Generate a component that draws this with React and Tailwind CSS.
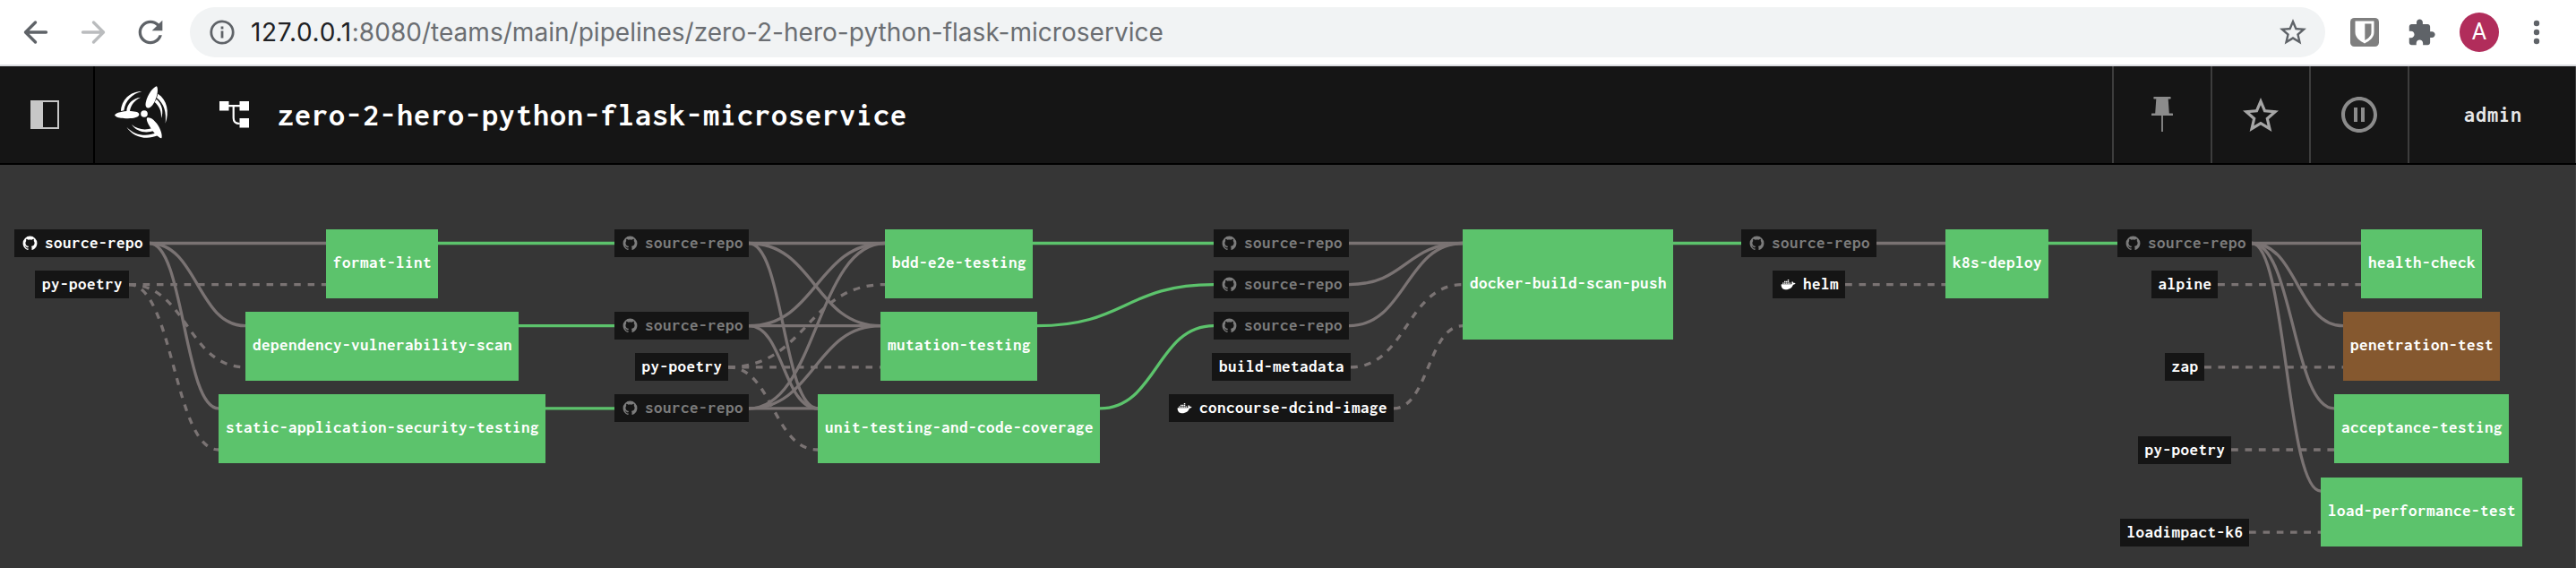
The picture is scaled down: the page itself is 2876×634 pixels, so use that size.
const GITHUB =
  "M12,2A10,10 0 0,0 2,12C2,16.42 4.87,20.17 8.84,21.5C9.34,21.58 9.5,21.27 9.5,21C9.5,20.77 9.5,20.14 9.5,19.31C6.73,19.91 6.14,17.97 6.14,17.97C5.68,16.81 5.03,16.5 5.03,16.5C4.12,15.88 5.1,15.9 5.1,15.9C6.1,15.97 6.63,16.93 6.63,16.93C7.5,18.45 8.97,18 9.54,17.76C9.63,17.11 9.89,16.67 10.17,16.42C7.95,16.17 5.62,15.31 5.62,11.5C5.62,10.39 6,9.5 6.65,8.79C6.55,8.54 6.2,7.5 6.75,6.15C6.75,6.15 7.59,5.88 9.5,7.17C10.29,6.95 11.15,6.84 12,6.84C12.85,6.84 13.71,6.95 14.5,7.17C16.41,5.88 17.25,6.15 17.25,6.15C17.8,7.5 17.45,8.54 17.35,8.79C18,9.5 18.38,10.39 18.38,11.5C18.38,15.32 16.04,16.16 13.81,16.41C14.17,16.72 14.5,17.33 14.5,18.26C14.5,19.6 14.5,20.68 14.5,21C14.5,21.27 14.66,21.59 15.17,21.5C19.14,20.16 22,16.42 22,12A10,10 0 0,0 12,2Z";
const WHALE =
  "M21.81 10.25C21.75 10.21 21.25 9.82 20.17 9.82C19.89 9.82 19.61 9.85 19.33 9.9C19.12 8.5 17.95 7.79 17.9 7.76L17.61 7.59L17.43 7.86C17.19 8.22 17 8.63 16.92 9.05C16.72 9.85 16.84 10.61 17.25 11.26C16.76 11.54 15.96 11.61 15.79 11.61H2.62C2.28 11.61 2 11.89 2 12.24C2 13.39 2.18 14.54 2.58 15.62C3.03 16.81 3.71 17.69 4.58 18.23C5.56 18.83 7.17 19.17 9 19.17C9.79 19.17 10.61 19.1 11.42 18.95C12.54 18.75 13.62 18.36 14.61 17.79C15.43 17.32 16.16 16.72 16.78 16C17.82 14.83 18.43 13.5 18.88 12.35H19.07C20.21 12.35 20.92 11.89 21.31 11.5C21.57 11.26 21.77 10.96 21.91 10.62L22 10.38L21.81 10.25Z";
const STAR =
  "M12,15.39L8.24,17.66L9.23,13.38L5.91,10.5L10.29,10.13L12,6.09L13.71,10.13L18.09,10.5L14.77,13.38L15.76,17.66M22,9.24L14.81,8.63L12,2L9.19,8.63L2,9.24L7.45,13.97L5.82,21L12,17.27L18.18,21L16.54,13.97L22,9.24Z";

// Top edge of each grid row, measured from the top of the canvas.
const ROWS = [72, 118, 164, 210, 256, 303, 349, 395];
const lineY = (row) => 87.5 + row * 46.1;

// [label, left, width, row, icon, dimmed]
const RESOURCES = [
  ["source-repo", 16, 151, 0, "github", false],
  ["py-poetry", 39, 105, 1, null, false],
  ["source-repo", 686, 150, 0, "github", true],
  ["source-repo", 686, 150, 2, "github", true],
  ["py-poetry", 709, 104, 3, null, false],
  ["source-repo", 686, 150, 4, "github", true],
  ["source-repo", 1355, 151, 0, "github", true],
  ["source-repo", 1355, 151, 1, "github", true],
  ["source-repo", 1355, 151, 2, "github", true],
  ["build-metadata", 1353, 155, 3, null, false],
  ["concourse-dcind-image", 1305, 251, 4, "docker", false],
  ["source-repo", 1944, 151, 0, "github", true],
  ["helm", 1979, 81, 1, "docker", false],
  ["source-repo", 2364, 150, 0, "github", true],
  ["alpine", 2402, 74, 1, null, false],
  ["zap", 2417, 44, 3, null, false],
  ["py-poetry", 2387, 104, 5, null, false],
  ["loadimpact-k6", 2367, 144, 7, null, false],
];

// [label, left, width, row, height, aborted]
const JOBS = [
  ["format-lint", 364, 125, 0, 77, false],
  ["dependency-vulnerability-scan", 274, 305, 2, 77, false],
  ["static-application-security-testing", 244, 365, 4, 77, false],
  ["bdd-e2e-testing", 988, 165, 0, 77, false],
  ["mutation-testing", 983, 175, 2, 77, false],
  ["unit-testing-and-code-coverage", 913, 315, 4, 77, false],
  ["docker-build-scan-push", 1633, 235, 0, 123, false],
  ["k8s-deploy", 2172, 115, 0, 77, false],
  ["health-check", 2636, 135, 0, 77, false],
  ["penetration-test", 2616, 175, 2, 77, true],
  ["acceptance-testing", 2606, 195, 4, 77, false],
  ["load-performance-test", 2591, 225, 6, 77, false],
];

// [x1, row1, x2, row2, kind]
const EDGES = [
  [167, 0, 364, 0, "plain"],
  [167, 0, 274, 2, "plain"],
  [167, 0, 244, 4, "plain"],
  [144, 1, 364, 1, "dashed"],
  [144, 1, 274, 3, "dashed"],
  [144, 1, 244, 5, "dashed"],
  [489, 0, 686, 0, "passed"],
  [579, 2, 686, 2, "passed"],
  [609, 4, 686, 4, "passed"],
  [836, 0, 988, 0, "plain"],
  [836, 0, 983, 2, "plain"],
  [836, 0, 913, 4, "plain"],
  [836, 2, 988, 0, "plain"],
  [836, 2, 983, 2, "plain"],
  [836, 2, 913, 4, "plain"],
  [836, 4, 988, 0, "plain"],
  [836, 4, 983, 2, "plain"],
  [836, 4, 913, 4, "plain"],
  [813, 3, 988, 1, "dashed"],
  [813, 3, 983, 3, "dashed"],
  [813, 3, 913, 5, "dashed"],
  [1153, 0, 1355, 0, "passed"],
  [1158, 2, 1355, 1, "passed"],
  [1228, 4, 1355, 2, "passed"],
  [1506, 0, 1633, 0, "plain"],
  [1506, 1, 1633, 0, "plain"],
  [1506, 2, 1633, 0, "plain"],
  [1508, 3, 1633, 1, "dashed"],
  [1556, 4, 1633, 2, "dashed"],
  [1868, 0, 1944, 0, "passed"],
  [2095, 0, 2172, 0, "plain"],
  [2060, 1, 2172, 1, "dashed"],
  [2287, 0, 2364, 0, "passed"],
  [2514, 0, 2636, 0, "plain"],
  [2514, 0, 2616, 2, "plain"],
  [2514, 0, 2606, 4, "plain"],
  [2514, 0, 2591, 6, "plain"],
  [2476, 1, 2636, 1, "dashed"],
  [2461, 3, 2616, 3, "dashed"],
  [2491, 5, 2606, 5, "dashed"],
  [2511, 7, 2591, 7, "dashed"],
];

function NodeIcon({ kind }) {
  return (
    <svg viewBox="0 0 24 24" className="mr-[7.5px] h-[19px] w-[19px] shrink-0" fill="currentColor">
      {kind === "github" ? (
        <path d={GITHUB} />
      ) : (
        <>
          <path d={WHALE} />
          <path d="M3.9 9.4h1.9v1.7H3.9zM6.3 9.4h1.9v1.7H6.3zM8.7 9.4h1.9v1.7H8.7zM11.1 9.4H13v1.7h-1.9zM13.5 9.4h1.9v1.7h-1.9zM6.3 7.2h1.9v1.7H6.3zM8.7 7.2h1.9v1.7H8.7zM11.1 7.2H13v1.7h-1.9zM11.1 5H13v1.7h-1.9z" />
        </>
      )}
    </svg>
  );
}

function Resource({ item }) {
  const [label, left, width, row, icon, dim] = item;
  return (
    <div
      className={`absolute flex h-[31px] items-center bg-[#151515] pb-px font-bold ${icon ? "justify-start pl-[7.5px]" : "justify-center pl-px"} ${dim ? "text-[#7c7c7c]" : "text-white"}`}
      style={{ left, top: ROWS[row], width }}
    >
      {icon && <NodeIcon kind={icon} />}
      <span className="whitespace-nowrap">{label}</span>
    </div>
  );
}

function Job({ item }) {
  const [label, left, width, row, height, brown] = item;
  return (
    <div
      className={`absolute flex items-center justify-center whitespace-nowrap pb-[3px] pl-px font-bold text-white ${brown ? "bg-[#85582f]" : "bg-[#5cc36c]"}`}
      style={{ left, top: ROWS[row], width, height }}
    >
      {label}
    </div>
  );
}

function Edge({ edge }) {
  const [x1, r1, x2, r2, kind] = edge;
  const y1 = lineY(r1);
  const y2 = lineY(r2);
  const mid = (x1 + x2) / 2;
  return (
    <path
      d={`M${x1},${y1} C${mid},${y1} ${mid},${y2} ${x2},${y2}`}
      fill="none"
      stroke={kind === "passed" ? "#5cc36c" : "#7a7373"}
      strokeWidth="3.3"
      strokeDasharray={kind === "dashed" ? "7.68 7.68" : undefined}
    />
  );
}

function BrowserBar() {
  return (
    <div className="flex h-[74px] shrink-0 items-center border-b-2 border-[#dadce0] bg-white pl-5 text-[#5f6368]">
      <svg viewBox="0 0 40 40" className="h-10 w-10" fill="none" stroke="currentColor" strokeWidth="3.4" strokeLinecap="round" strokeLinejoin="round">
        <path d="M31.5 20H9M19.5 9L8.5 20l11 11" />
      </svg>
      <svg viewBox="0 0 40 40" className="ml-6 h-10 w-10 text-[#babcbe]" fill="none" stroke="currentColor" strokeWidth="3.4" strokeLinecap="round" strokeLinejoin="round">
        <path d="M8.5 20H31M20.5 9l11 11-11 11" />
      </svg>
      <svg viewBox="0 0 24 24" className="ml-6 h-10 w-10" fill="currentColor">
        <path d="M17.65 6.35C16.2 4.9 14.21 4 12 4c-4.42 0-7.99 3.58-7.99 8s3.57 8 7.99 8c3.73 0 6.84-2.55 7.73-6h-2.08c-.82 2.33-3.04 4-5.65 4-3.31 0-6-2.69-6-6s2.69-6 6-6c1.66 0 3.14.69 4.22 1.78L13 11h7V4z" />
      </svg>
      <div className="ml-6 flex h-14 w-[2384px] items-center rounded-full bg-[#f1f3f4] pr-[18px] pl-[22px]">
        <svg viewBox="0 0 28 28" className="h-7 w-7 shrink-0" fill="none" stroke="currentColor" strokeWidth="2.8">
          <circle cx="14" cy="14" r="12.2" />
          <path d="M14 12.5v8M14 7.5v3" />
        </svg>
        <div className="ml-[18px] grow whitespace-nowrap font-['Inter'] text-[28px] tracking-[0.03px] text-[#6b6e72]">
          <span className="tracking-[0.7px] text-[#202124]">127.0.0.1</span>:8080/teams/main/pipelines/zero-2-hero-python-flask-microservice
        </div>
        <svg viewBox="0 0 24 24" className="h-9 w-9 shrink-0" fill="currentColor">
          <path d={STAR} />
        </svg>
      </div>
      <svg viewBox="0 0 32 32" className="ml-7 h-8 w-8">
        <rect width="32" height="32" rx="4.5" fill="#7f7f7f" />
        <path d="M5.5 3.5h21v12.5c0 6-5 9.5-10.5 12.5C10.5 25.5 5.5 22 5.5 16z" fill="#fff" />
        <path d="M16.3 6.5h7.2V16c0 4-3.2 6.6-7.2 9z" fill="#7f7f7f" />
      </svg>
      <svg viewBox="0 0 24 24" className="ml-[31px] h-[33px] w-[33px]" fill="currentColor">
        <path d="M20.5 11H19V7c0-1.1-.9-2-2-2h-4V3.5C13 2.12 11.88 1 10.5 1S8 2.12 8 3.5V5H4c-1.1 0-1.99.9-1.99 2v3.8H3.5c1.49 0 2.7 1.21 2.7 2.7s-1.21 2.7-2.7 2.7H2V20c0 1.1.9 2 2 2h3.8v-1.5c0-1.49 1.21-2.7 2.7-2.7 1.49 0 2.7 1.21 2.7 2.7V22H17c1.1 0 2-.9 2-2v-4h1.5c1.38 0 2.5-1.12 2.5-2.5S21.88 11 20.5 11z" />
      </svg>
      <div className="ml-[26px] flex h-11 w-11 items-center justify-center rounded-full bg-[#b12d5b] font-['Roboto'] text-[25px] text-white">A</div>
      <svg viewBox="0 0 8 28" className="ml-[38px] h-7 w-2" fill="currentColor">
        <circle cx="4" cy="4" r="3.2" />
        <circle cx="4" cy="14" r="3.2" />
        <circle cx="4" cy="24" r="3.2" />
      </svg>
    </div>
  );
}

function Fan() {
  return (
    <svg viewBox="0 0 270 240" className="ml-3.5 h-20 w-[90px]" fill="#fff">
      <path d="M24 121C30 112 55 107 78 108C95 109 106 112 106 119C106 127 93 131 76 132C50 134 28 131 24 121Z" />
      <path d="M165 25C171 34 167 56 159 74C151 91 140 100 133 97C125 93 127 80 132 66C141 44 155 27 165 25Z" />
      <path d="M181 199C171 198 154 180 143 162C133 146 128 133 134 130C142 127 155 136 165 149C178 166 185 189 181 199Z" />
      <circle cx="123" cy="117" r="11.5" />
      <path d="M45 108C47 71 75 42 115 42C84 50 60 72 55 106Z" />
      <path d="M64 108C65 84 84 65 111 62C91 72 78 87 75 108Z" />
      <path d="M169 50C200 70 208 111 194 149C198 113 190 83 165 64Z" />
      <path d="M164 68C184 86 188 110 180 132C181 108 174 92 158 78Z" />
      <path d="M64 161C84 193 127 207 168 190L163 181C129 195 92 190 64 161Z" />
      <path d="M81 153C97 177 127 184 156 174L151 165C126 173 101 170 81 153Z" />
    </svg>
  );
}

function TopBar() {
  return (
    <div className="flex h-[110px] shrink-0 border-b-2 border-black bg-[#151515] font-['Inconsolata',monospace]">
      <div className="flex w-[106px] items-center border-r-2 border-black pl-[34px]">
        <svg viewBox="0 0 32 32" className="h-8 w-8">
          <rect x="1" y="1" width="30" height="30" fill="none" stroke="#c7c7c7" strokeWidth="2" />
          <rect width="14" height="32" fill="#c7c7c7" />
        </svg>
      </div>
      <div className="flex grow items-center pb-px">
        <Fan />
        <svg viewBox="0 0 33 30" className="ml-[35px] h-[30px] w-[33px]" fill="#fff">
          <path d="M0 0h10.5v10.5H0zM22.5 0H33v10.5H22.5zM22.5 19H33v10.5H22.5z" />
          <path d="M10 5.2h13M15.7 5.2v13.5c0 4.5 2 6.3 7 6.3" fill="none" stroke="#fff" strokeWidth="2.2" />
        </svg>
        <div className="ml-8 whitespace-nowrap text-[36px] font-bold tracking-[1px] text-white">zero-2-hero-python-flask-microservice</div>
      </div>
      <div className="flex w-[112px] items-center justify-center border-l-2 border-[#3d3d3d] pr-0.5">
        <svg viewBox="0 0 24 40" className="h-10 w-6" fill="#8b8b8b">
          <path d="M3.5 0h17a1.2 1.2 0 0 1 0 2.6H18.7L19.8 18.5H23a1.2 1.2 0 0 1 0 2.6H12.9V39H11.1V21.1H1a1.2 1.2 0 0 1 0-2.6H4.2L5.3 2.6H3.5A1.2 1.2 0 0 1 3.5 0Z" />
        </svg>
      </div>
      <div className="-ml-0.5 flex w-[112px] items-center justify-center border-l-2 border-[#3d3d3d] pt-0.5 pr-0.5">
        <svg viewBox="0 0 24 24" className="h-12 w-12" fill="#a6a6a6">
          <path d={STAR} />
        </svg>
      </div>
      <div className="-ml-0.5 flex w-[112px] items-center justify-center border-l-2 border-[#3d3d3d] pr-0.5">
        <svg viewBox="0 0 24 24" className="h-12 w-12" fill="#8b8b8b">
          <path d="M9 16h2V8H9v8zm3-14C6.48 2 2 6.48 2 12s4.48 10 10 10 10-4.48 10-10S17.52 2 12 2zm0 18c-4.41 0-8-3.59-8-8s3.59-8 8-8 8 3.59 8 8-3.59 8-8 8zm1-4h2V8h-2v8z" />
        </svg>
      </div>
      <div className="-ml-0.5 flex w-[188px] items-center justify-center border-r border-l-2 border-[#3d3d3d] pl-0.5 text-2xl font-bold tracking-[1px] text-[#e6e7e8]">
        admin
      </div>
    </div>
  );
}

export default function App() {
  return (
    <div className="flex h-[634px] w-[2876px] flex-col overflow-hidden bg-[#363636]">
      <BrowserBar />
      <TopBar />
      <div className="relative grow border-r border-[#444444] font-['Inconsolata',monospace] text-[19px] leading-none tracking-[0.5px]">
        <svg viewBox="0 0 2876 450" className="absolute top-0 left-0 h-[450px] w-[2876px]">
          {EDGES.map((e, i) => (
            <Edge key={i} edge={e} />
          ))}
        </svg>
        {RESOURCES.map((r, i) => (
          <Resource key={i} item={r} />
        ))}
        {JOBS.map((j) => (
          <Job key={j[0]} item={j} />
        ))}
      </div>
    </div>
  );
}
